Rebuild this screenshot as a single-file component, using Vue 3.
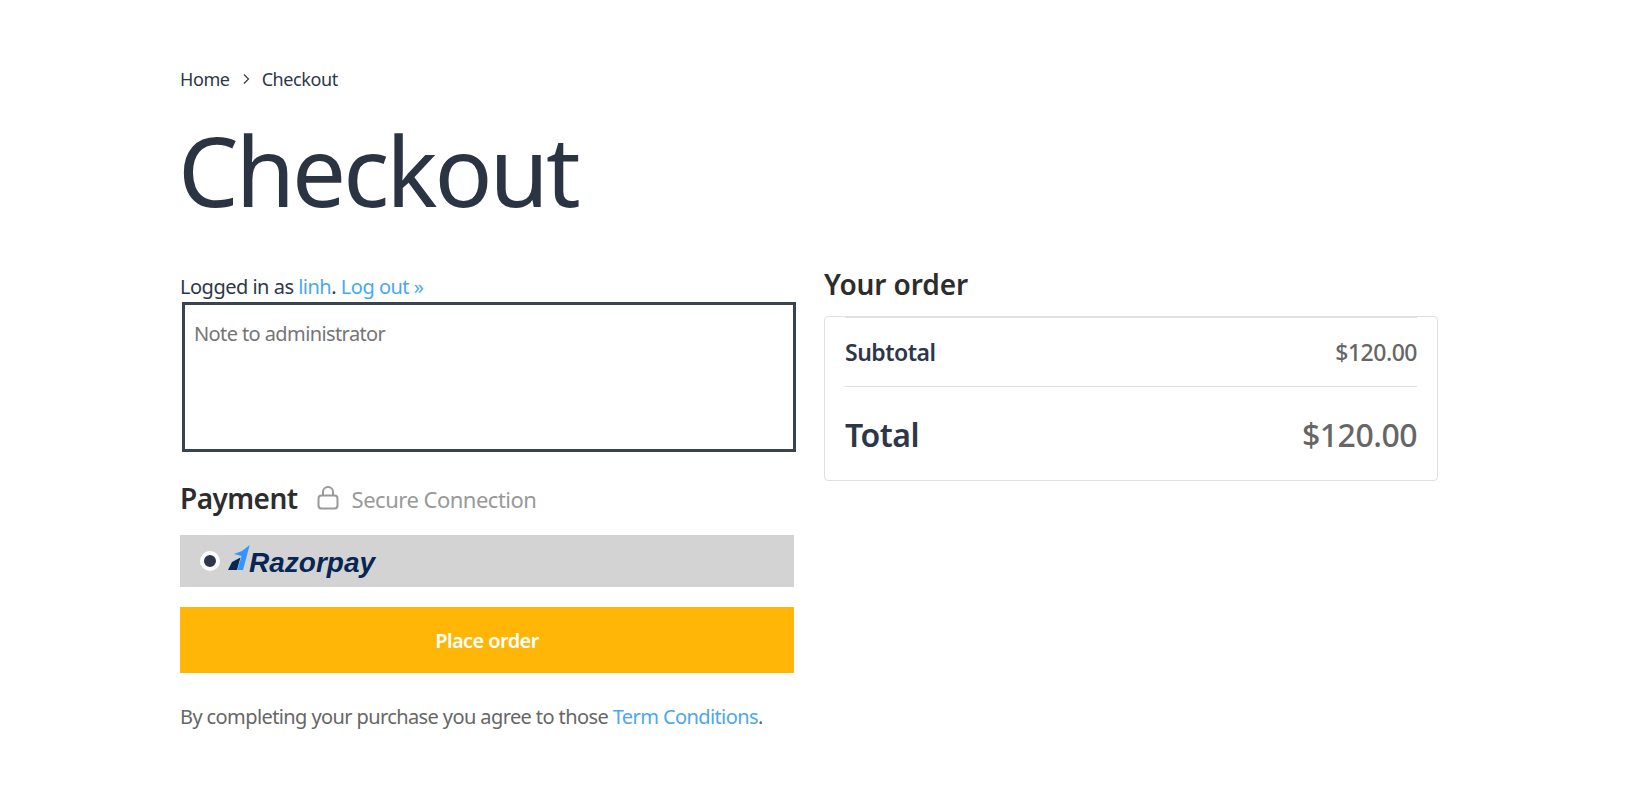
<script setup>
const totals = { subtotal: '$120.00', total: '$120.00' }
</script>

<template>
  <div class="page">
    <nav class="crumbs">
      <a href="#">Home</a>
      <svg class="chevron" width="10" height="12" viewBox="0 0 10 12"><path d="M3 1.5 7.5 6 3 10.5" fill="none" stroke="#2d3748" stroke-width="1.2" /></svg>
      <span>Checkout</span>
    </nav>
    <h1 class="title">Checkout</h1>

    <div class="columns">
      <div class="left">
        <p class="logged">Logged in as <a href="#">linh</a>. <a href="#">Log out »</a></p>
        <textarea class="note" placeholder="Note to administrator"></textarea>

        <div class="pay-head">
          <h2>Payment</h2>
          <svg class="lock" width="22" height="24" viewBox="0 0 22 24">
            <rect x="1.5" y="9.5" width="19" height="13" rx="3" fill="none" stroke="#999" stroke-width="2" />
            <path d="M6 9.5V6a5 5 0 0 1 10 0v3.5" fill="none" stroke="#999" stroke-width="2" />
          </svg>
          <span class="secure">Secure Connection</span>
        </div>

        <div class="method">
          <span class="radio"></span>
          <svg class="mark" width="22" height="25" viewBox="0 0 22 25">
            <path d="M0 25 4 17 12.5 12.5 9 25Z" fill="#072654" />
            <path d="M6 9 14 6 21.7 0 15 25H9.5L13.5 11Z" fill="#3395ff" />
          </svg>
          <span class="brand">Razorpay</span>
        </div>

        <button class="place">Place order</button>
        <p class="terms">By completing your purchase you agree to those <a href="#">Term Conditions</a>.</p>
      </div>

      <div class="right">
        <h2 class="order-title">Your order</h2>
        <div class="card">
          <div class="row sub">
            <span>Subtotal</span>
            <span class="amount">{{ totals.subtotal }}</span>
          </div>
          <div class="row total">
            <span>Total</span>
            <span class="amount">{{ totals.total }}</span>
          </div>
        </div>
      </div>
    </div>
  </div>
</template>

<style>
html, body {
  margin: 0;
  background: #fff;
}
</style>

<style scoped>
.page {
  box-sizing: border-box;
  width: 1258px;
  margin-left: 180px;
  padding-top: 67px;
  font-family: "Noto Sans", "Open Sans", sans-serif;
  font-size: 20px;
  letter-spacing: -0.5px;
  color: #2d3748;
}

a {
  color: #4aa8ee;
  text-decoration: none;
}

.crumbs {
  display: flex;
  align-items: center;
  gap: 11px;
  height: 24px;
  font-size: 18px;
  letter-spacing: -0.4px;
  line-height: 24px;
}

.crumbs a {
  color: #2d3748;
}

.title {
  margin: 19px 0 0 -2px;
  font-size: 96px;
  font-weight: 400;
  line-height: 120px;
  letter-spacing: -3px;
  color: #2b3442;
}

.columns {
  display: flex;
  gap: 30px;
  margin-top: 43px;
}

.left,
.right {
  width: 614px;
}

.logged {
  margin: 0;
  height: 27px;
  line-height: 27px;
}

.note {
  display: block;
  box-sizing: border-box;
  width: 614px;
  height: 150px;
  margin: 2px 0 0 2px;
  padding: 15px 9px;
  border: 3px solid #3a4350;
  outline: none;
  resize: none;
  font: inherit;
  letter-spacing: -0.6px;
  color: #2d3748;
}

.note::placeholder {
  color: #757575;
  opacity: 1;
}

.pay-head {
  display: flex;
  align-items: center;
  height: 44px;
  margin-top: 24px;
  color: #999;
  font-size: 22px;
}

.pay-head h2 {
  margin: 0;
  font-size: 28px;
  font-weight: 560;
  letter-spacing: -0.55px;
  color: #2d2d2d;
}

.lock {
  margin: 0 13px 0 19px;
}

.secure {
  padding-top: 2px;
}

.method {
  display: flex;
  align-items: center;
  height: 52px;
  margin-top: 15px;
  padding-left: 20px;
  background: #d3d3d3;
}

.radio {
  box-sizing: border-box;
  width: 20px;
  height: 20px;
  margin-right: 8px;
  border: 4px solid #fff;
  border-radius: 50%;
  background: #2d3748;
}

.mark {
  margin-bottom: 7px;
}

.brand {
  margin: 3px 0 0 -1px;
  font-family: "Liberation Sans", sans-serif;
  font-size: 28px;
  font-style: italic;
  font-weight: 700;
  letter-spacing: 0;
  color: #072654;
}

.place {
  display: block;
  width: 614px;
  height: 66px;
  margin-top: 20px;
  border: none;
  background: #ffb606;
  color: #fff;
  font: inherit;
  font-weight: 560;
  letter-spacing: -0.6px;
}

.terms {
  margin: 30px 0 0;
  line-height: 27px;
  letter-spacing: -0.6px;
  color: #666;
}

.order-title {
  margin: 0;
  height: 43px;
  font-size: 28px;
  font-weight: 560;
  line-height: 22px;
  letter-spacing: -0.1px;
  color: #2d2d2d;
}

.card {
  box-sizing: border-box;
  height: 165px;
  padding: 0 20px;
  border: 1px solid #e0e0dc;
  border-radius: 4px;
}

.row {
  display: flex;
  justify-content: space-between;
  align-items: center;
  font-weight: 560;
}

.amount {
  color: #666;
  font-weight: 500;
}

.sub {
  height: 68px;
  border-top: 1px solid #e0e0dc;
  border-bottom: 1px solid #e0e0dc;
  font-size: 23px;
}

.total {
  height: 94px;
  font-size: 32px;
}
</style>
